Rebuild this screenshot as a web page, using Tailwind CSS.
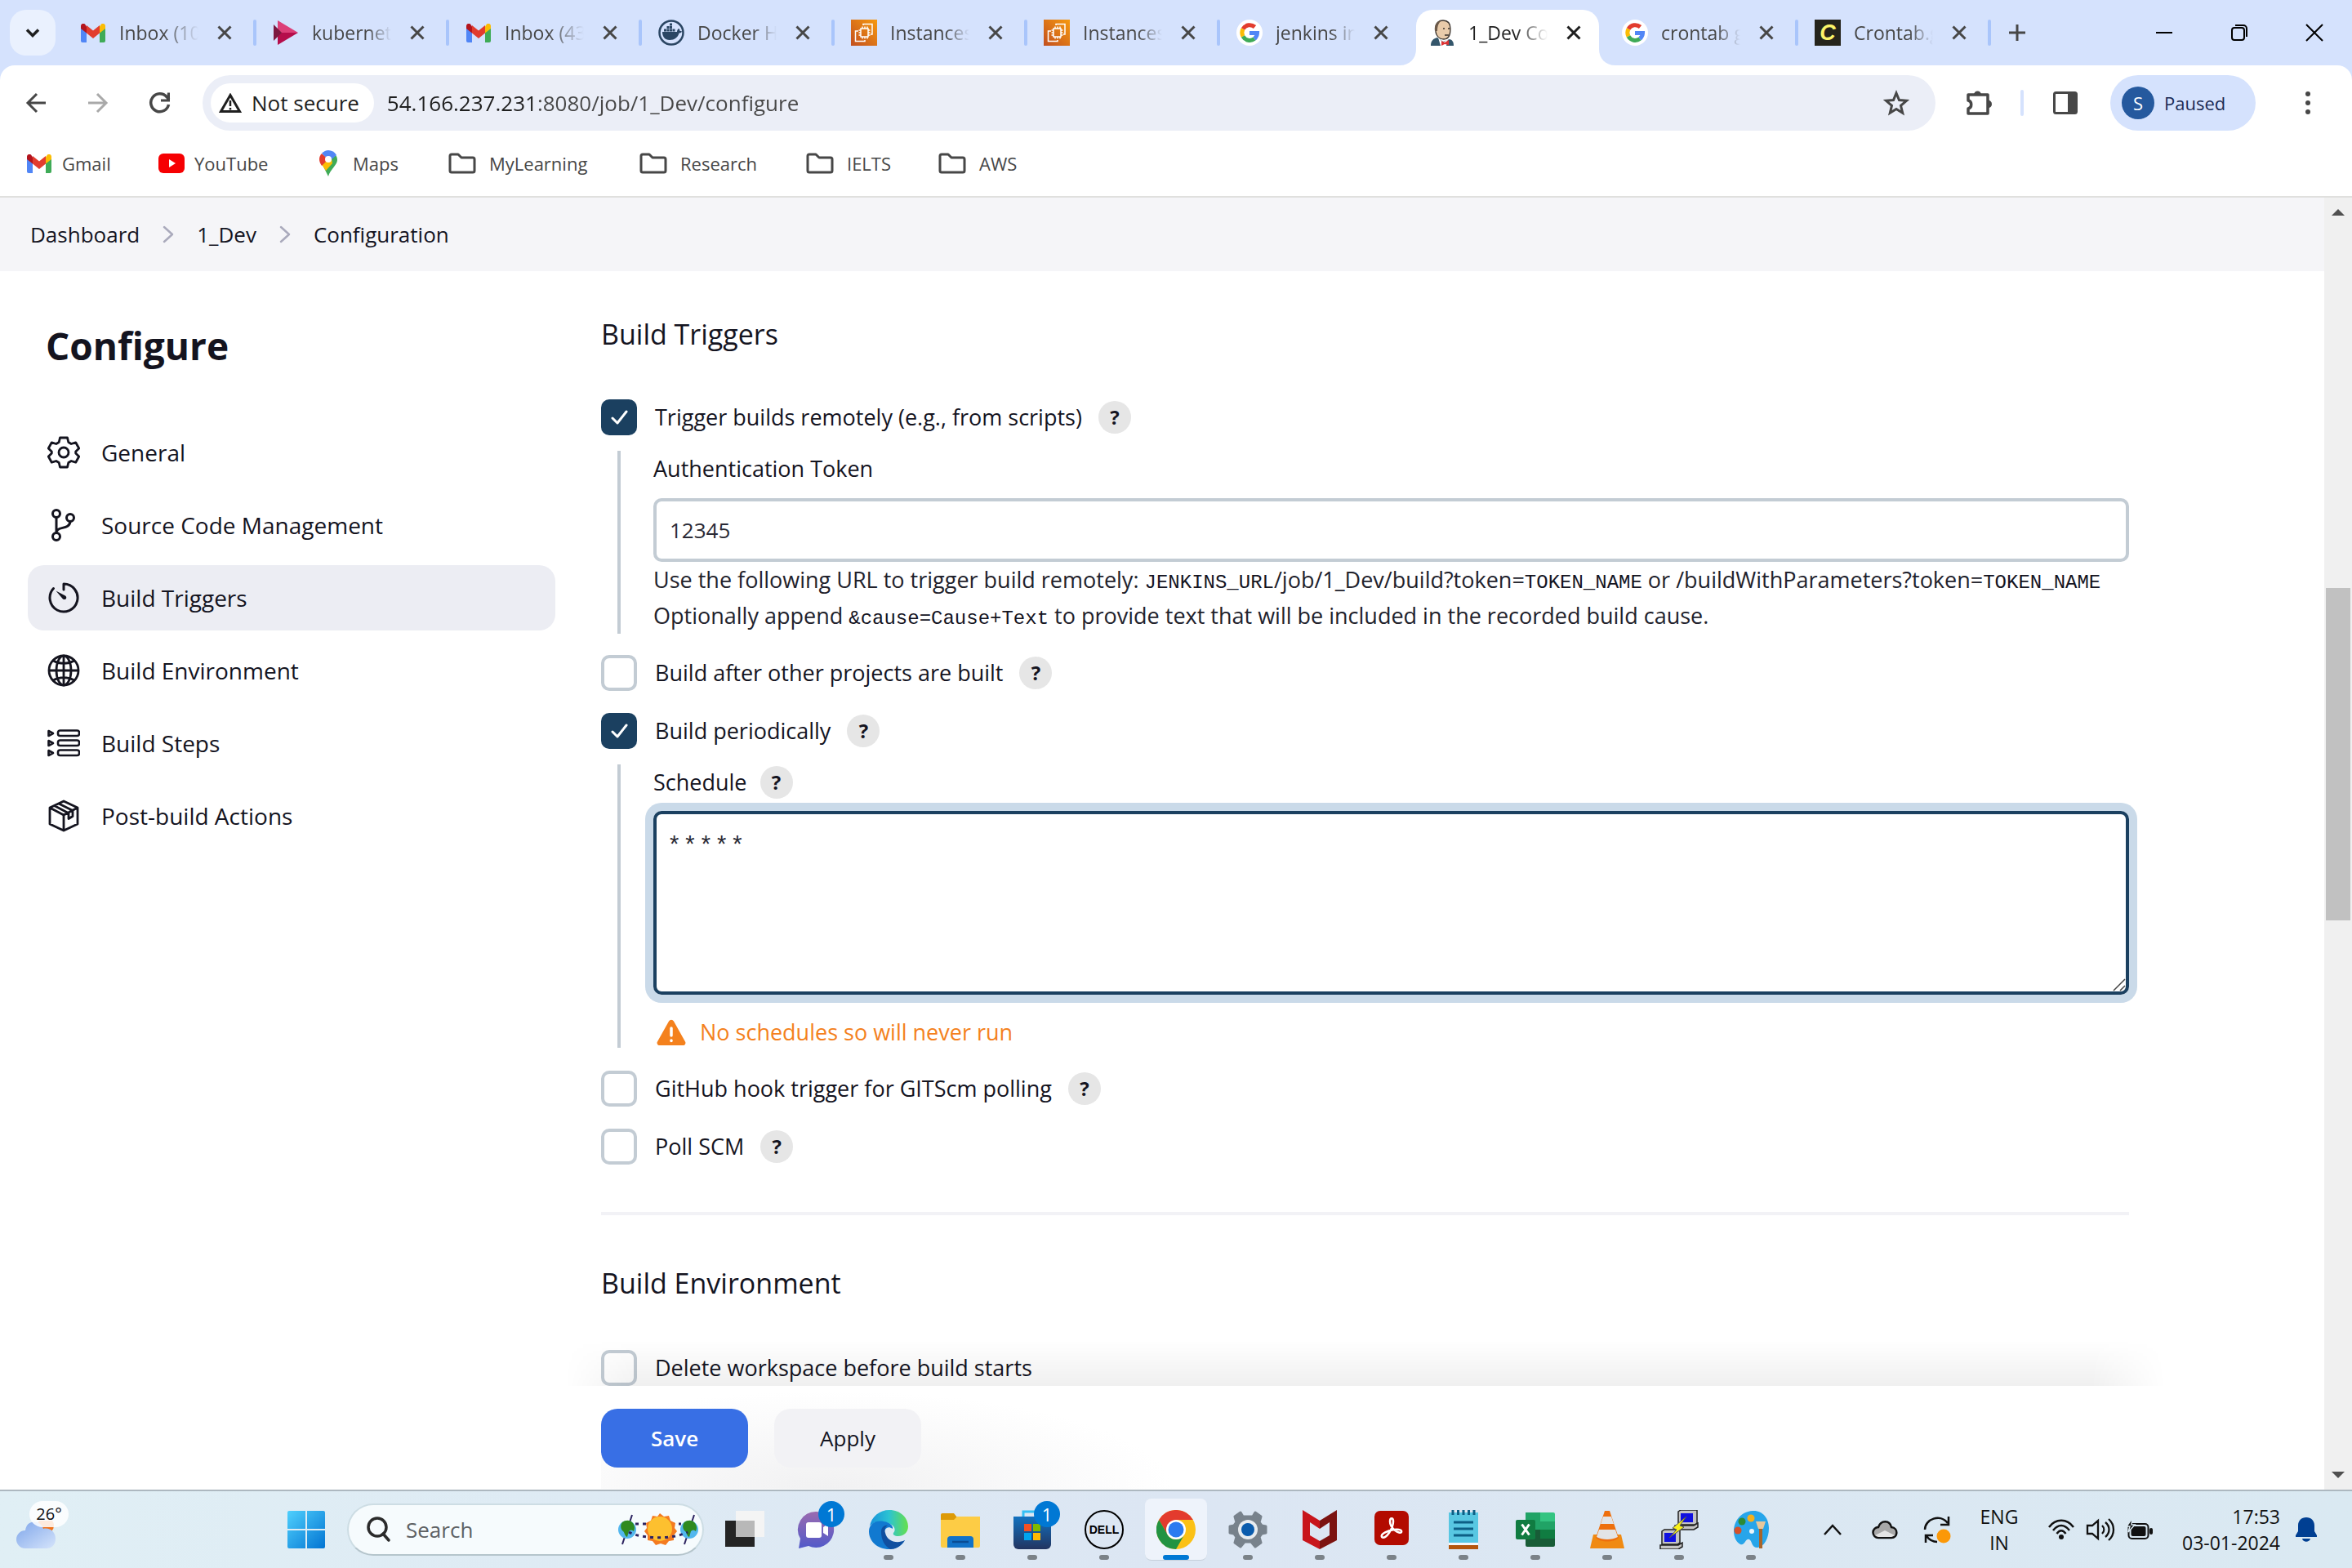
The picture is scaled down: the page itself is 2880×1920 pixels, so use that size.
<!DOCTYPE html>
<html lang="en">
<head>
<meta charset="utf-8">
<title>1_Dev Config [Jenkins]</title>
<script src="https://cdn.jsdelivr.net/npm/@tailwindcss/browser@4"></script>
</head>
<body class="flex min-h-screen flex-col bg-white font-['Open_Sans','Noto_Sans',sans-serif] text-[#14141f]">

<!-- Shared icon symbols -->
<svg class="absolute size-0" aria-hidden="true">
  <defs><linearGradient id="og" x1="0" y1="1" x2="1" y2="0"><stop stop-color="#c24f1f"/><stop offset="1" stop-color="#f79a10"/></linearGradient></defs>
  <symbol id="gmail" viewBox="0 0 30 23">
    <path fill="#5186f6" d="M0 5v16a2 2 0 0 0 2 2h5V10z"/><path fill="#3fab57" d="M30 5v16a2 2 0 0 1-2 2h-5V10z"/>
    <path fill="#fbbc04" d="M23 3.500v8l7-5.500V3c0-3-3-4-5-2.500z"/><path fill="#b3141d" d="M7 3.500v8L0 6V3C0 0 3-1 5 .500z"/><path fill="#e23c2e" d="M7 11.500V2l8 6.500L23 2v9.500L15 18z"/>
  </symbol>
  <symbol id="google" viewBox="0 0 32 32">
    <circle cx="16" cy="16" r="16" fill="#fff"/>
    <g fill="none" stroke-width="5"><path stroke="#e23c2e" d="M8 11.500A9.500 9.500 0 0 1 22.500 9"/><path stroke="#fbbc04" d="M8 11.500a9.500 9.500 0 0 0 0 9"/><path stroke="#3fab57" d="M8 20.500A9.500 9.500 0 0 0 22 23.500"/><path stroke="#5186f6" d="M16 16.500h9.500A9.500 9.500 0 0 1 22 23.500"/></g>
  </symbol>
  <symbol id="ec2" viewBox="0 0 32 32">
    <path fill="url(#og)" d="M0 0h32v32H0z"/>
    <g fill="none" stroke="#fff" stroke-width="1.500"><path d="M12 11h9v10h-9zM14 8.500V11m3-2.500V11m3-2.500V11M14 21v2.500M17 21v2.500M20 21v2.500M9.500 13H12m-2.500 3H12m-2.500 3H12M21 13h2.500M21 16h2.500M21 19h2.500"/><path d="M15 7V5.500h11V18h-2M9 14H5.500v12.500H17V25"/></g>
  </symbol>
  <symbol id="folder" viewBox="0 0 34 26"><path fill="none" stroke="#474747" stroke-width="3" stroke-linejoin="round" d="M2 4a2 2 0 0 1 2-2h8l4 4h14a2 2 0 0 1 2 2v14a2 2 0 0 1-2 2H4a2 2 0 0 1-2-2z"/></symbol>
  <symbol id="x" viewBox="0 0 24 24"><path fill="none" stroke="currentColor" stroke-width="3" d="M4.500 4.500l15 15m0-15l-15 15"/></symbol>
  <symbol id="check" viewBox="0 0 44 44"><path fill="none" stroke="#fff" stroke-width="3" stroke-linecap="round" stroke-linejoin="round" d="M14 23l6 6 11-14"/></symbol>
  <symbol id="crumb" viewBox="0 0 14 22"><path fill="none" stroke="#aaaabc" stroke-width="2.500" stroke-linecap="round" stroke-linejoin="round" d="M2 2l10 9-10 9"/></symbol>
</svg>

<!-- Browser chrome -->
<header class="bg-[#d5e2fd]">
  <div class="flex h-20 pl-3">
    <button aria-label="Search tabs" class="mt-3 mr-[10px] grid size-14 shrink-0 place-items-center rounded-[20px] bg-[#eaf1fe]">
      <svg class="size-6" viewBox="0 0 24 24"><path fill="none" stroke="#1f1f1f" stroke-width="3.500" d="M5 8.500l7 7 7-7"/></svg>
    </button>
    <nav aria-label="Tabs" class="flex">
      <div class="flex w-[236px] items-center pl-5">
        <svg class="h-[23px] w-8 shrink-0"><use href="#gmail"/></svg>
        <a href="#" class="ml-4 w-[97px] overflow-hidden text-[23px] leading-8 whitespace-nowrap text-[#474747] [mask-image:linear-gradient(to_right,black_55%,transparent)]">Inbox (10,482)</a>
        <button aria-label="Close tab" class="ml-5 text-[#474747]"><svg class="size-6"><use href="#x"/></svg></button>
        <span class="ml-auto h-8 w-1 rounded bg-[#a9c5fb]"></span>
      </div>
      <div class="flex w-[236px] items-center pl-5">
        <svg class="size-8 shrink-0" viewBox="0 0 32 32"><path fill="#dc3f78" d="M6 1l25 15H6z"/><path fill="#b50d4b" d="M6 31l25-15H6z"/><path fill="#7c1840" d="M1 6l10 10L1 26z"/></svg>
        <a href="#" class="ml-4 w-[97px] overflow-hidden text-[23px] leading-8 whitespace-nowrap text-[#474747] [mask-image:linear-gradient(to_right,black_70%,transparent)]">kubernetes</a>
        <button aria-label="Close tab" class="ml-5 text-[#474747]"><svg class="size-6"><use href="#x"/></svg></button>
        <span class="ml-auto h-8 w-1 rounded bg-[#a9c5fb]"></span>
      </div>
      <div class="flex w-[236px] items-center pl-5">
        <svg class="h-[23px] w-8 shrink-0"><use href="#gmail"/></svg>
        <a href="#" class="ml-4 w-[97px] overflow-hidden text-[23px] leading-8 whitespace-nowrap text-[#474747] [mask-image:linear-gradient(to_right,black_55%,transparent)]">Inbox (438)</a>
        <button aria-label="Close tab" class="ml-5 text-[#474747]"><svg class="size-6"><use href="#x"/></svg></button>
        <span class="ml-auto h-8 w-1 rounded bg-[#a9c5fb]"></span>
      </div>
      <div class="flex w-[236px] items-center pl-5">
        <svg class="size-8 shrink-0" viewBox="0 0 32 32"><circle cx="16" cy="16" r="14.500" fill="none" stroke="#2b4663" stroke-width="2.500"/><path fill="#2b4663" d="M5 15h18c0-2 1-3.500 2-4 1.500 1 1.500 2 1.500 3 1 0 2 0 2.500.500-.500 1.500-2 2-3.500 2C24 22 20 25 14 25c-6 0-9-4-9-10zM7 11.500h3v3H7zm3.500 0h3v3h-3zm3.500 0h3v3h-3zm3.500 0h3v3h-3zM10.500 8h3v3h-3zM14 8h3v3h-3zm0-3.500h3v3h-3z"/></svg>
        <a href="#" class="ml-4 w-[97px] overflow-hidden text-[23px] leading-8 whitespace-nowrap text-[#474747] [mask-image:linear-gradient(to_right,black_70%,transparent)]">Docker Hub</a>
        <button aria-label="Close tab" class="ml-5 text-[#474747]"><svg class="size-6"><use href="#x"/></svg></button>
        <span class="ml-auto h-8 w-1 rounded bg-[#a9c5fb]"></span>
      </div>
      <div class="flex w-[236px] items-center pl-5">
        <svg class="size-8 shrink-0"><use href="#ec2"/></svg>
        <a href="#" class="ml-4 w-[97px] overflow-hidden text-[23px] leading-8 whitespace-nowrap text-[#474747] [mask-image:linear-gradient(to_right,black_70%,transparent)]">Instances</a>
        <button aria-label="Close tab" class="ml-5 text-[#474747]"><svg class="size-6"><use href="#x"/></svg></button>
        <span class="ml-auto h-8 w-1 rounded bg-[#a9c5fb]"></span>
      </div>
      <div class="flex w-[236px] items-center pl-5">
        <svg class="size-8 shrink-0"><use href="#ec2"/></svg>
        <a href="#" class="ml-4 w-[97px] overflow-hidden text-[23px] leading-8 whitespace-nowrap text-[#474747] [mask-image:linear-gradient(to_right,black_70%,transparent)]">Instances</a>
        <button aria-label="Close tab" class="ml-5 text-[#474747]"><svg class="size-6"><use href="#x"/></svg></button>
        <span class="ml-auto h-8 w-1 rounded bg-[#a9c5fb]"></span>
      </div>
      <div class="flex w-[236px] items-center pl-5">
        <svg class="size-8 shrink-0"><use href="#google"/></svg>
        <a href="#" class="ml-4 w-[97px] overflow-hidden text-[23px] leading-8 whitespace-nowrap text-[#474747] [mask-image:linear-gradient(to_right,black_70%,transparent)]">jenkins install</a>
        <button aria-label="Close tab" class="ml-5 text-[#474747]"><svg class="size-6"><use href="#x"/></svg></button>
      </div>
      <!-- Active tab with flared feet -->
      <div class="relative flex w-[236px] px-1">
        <svg class="absolute bottom-0 -left-4 size-5" viewBox="0 0 20 20"><path fill="#fff" d="M20 0v20H0C12 20 20 12 20 0z"/></svg>
        <svg class="absolute -right-3 bottom-0 size-5" viewBox="0 0 20 20"><path fill="#fff" d="M0 0v20h20C8 20 0 12 0 0z"/></svg>
        <div class="mt-3 flex w-[224px] items-center rounded-t-[20px] bg-white pb-3 pl-4">
          <svg class="size-8 shrink-0" viewBox="0 0 32 32"><path fill="#e9cbaa" stroke="#3a332d" stroke-width="1.300" d="M8 10c0-6 4-9 9-9 6 0 9 4 9 10 0 8-2 13-8 13-7 0-11-6-10-14z"/><path fill="#6c5a4a" d="M7 14c-1-7 2-12 8-13-3 3-5 6-5 13z"/><path fill="#34566b" d="M2 32c0-6 3-9 8-10l7 5 8-3c4 1 5 4 5 8z"/><path fill="#fff" d="M11 22l6 6 6-4-2 8h-7z"/><path fill="#d33" d="M15 26l4 2 5-3v6l-5-1-4 2z"/><path stroke="#3a332d" stroke-width="1.300" d="M17 11h2m4 0h2m-6 8h5" fill="none"/></svg>
          <a href="#" aria-current="page" class="ml-4 w-[97px] overflow-hidden text-[23px] leading-8 whitespace-nowrap text-[#1f1f1f] [mask-image:linear-gradient(to_right,black_60%,transparent)]">1_Dev Config</a>
          <button aria-label="Close tab" class="ml-5 text-[#1f1f1f]"><svg class="size-6"><use href="#x"/></svg></button>
        </div>
      </div>
      <div class="flex w-[236px] items-center pl-5">
        <svg class="size-8 shrink-0"><use href="#google"/></svg>
        <a href="#" class="ml-4 w-[97px] overflow-hidden text-[23px] leading-8 whitespace-nowrap text-[#474747] [mask-image:linear-gradient(to_right,black_70%,transparent)]">crontab guru</a>
        <button aria-label="Close tab" class="ml-5 text-[#474747]"><svg class="size-6"><use href="#x"/></svg></button>
        <span class="ml-auto h-8 w-1 rounded bg-[#a9c5fb]"></span>
      </div>
      <div class="flex w-[236px] items-center pl-5">
        <span class="grid size-8 shrink-0 place-items-center bg-[#25241c] font-['Liberation_Sans',sans-serif] text-[27px] leading-8 font-bold text-[#fbf46a] italic">C</span>
        <a href="#" class="ml-4 w-[97px] overflow-hidden text-[23px] leading-8 whitespace-nowrap text-[#474747] [mask-image:linear-gradient(to_right,black_70%,transparent)]">Crontab.guru</a>
        <button aria-label="Close tab" class="ml-5 text-[#474747]"><svg class="size-6"><use href="#x"/></svg></button>
        <span class="ml-auto h-8 w-1 rounded bg-[#a9c5fb]"></span>
      </div>
    </nav>
    <button aria-label="New tab" class="ml-5"><svg class="size-6" viewBox="0 0 24 24"><path stroke="#474747" stroke-width="3" d="M12 2v20M2 12h20"/></svg></button>
    <div class="ml-auto flex items-center">
      <button aria-label="Minimize" class="grid w-[92px] place-items-center"><svg class="size-6" viewBox="0 0 24 24"><path stroke="#000" stroke-width="2" d="M2 12h20"/></svg></button>
      <button aria-label="Restore" class="grid w-[92px] place-items-center"><svg class="size-6" viewBox="0 0 24 24"><g fill="none" stroke="#000" stroke-width="2"><rect x="3" y="6" width="15" height="15" rx="3"/><path d="M7 3h10a4 4 0 0 1 4 4v10"/></g></svg></button>
      <button aria-label="Close" class="grid w-[92px] place-items-center"><svg class="size-6" viewBox="0 0 24 24"><path stroke="#000" stroke-width="2" d="M2 2l20 20M22 2L2 22"/></svg></button>
    </div>
  </div>

  <div class="rounded-t-[18px] border-b-2 border-[#e0e0de] bg-white">
    <div class="flex items-center pt-3 pr-[50px] pl-[30px]">
      <button aria-label="Back"><svg class="size-7" viewBox="0 0 28 28"><path fill="none" stroke="#474747" stroke-width="3" d="M26 14H4m11-11L4 14l11 11"/></svg></button>
      <button aria-label="Forward" class="ml-12"><svg class="size-7" viewBox="0 0 28 28"><path fill="none" stroke="#a9a9a9" stroke-width="3" d="M2 14h22M13 3l11 11-11 11"/></svg></button>
      <button aria-label="Reload" class="ml-12"><svg class="size-7" viewBox="0 0 28 28"><path fill="none" stroke="#474747" stroke-width="3.500" d="M24.500 16A11 11 0 1 1 22 6.500l3 3"/><path fill="#474747" d="M26 1.500v11H15v-3h7l1-8z"/></svg></button>
      <div class="ml-[38px] flex h-[68px] flex-1 items-center rounded-full bg-[#ebeef7] pr-8 pl-[10px]">
        <button class="flex h-12 items-center gap-3 rounded-full bg-white pr-[18px] pl-[10px] text-[26px] text-[#1f1f1f]">
          <svg class="h-6 w-7" viewBox="0 0 28 24"><path fill="none" stroke="#1f1f1f" stroke-width="3" d="M14 2.500L2.500 22.500h23z"/><path stroke="#1f1f1f" stroke-width="2.500" d="M14 9v7m0 2v2.500"/></svg>
          Not secure
        </button>
        <input aria-label="Address" value="54.166.237.231:8080/job/1_Dev/configure" class="ml-4 flex-1 bg-[linear-gradient(to_right,#1f1f1f_182px,#474747_182px)] bg-clip-text text-[26px] text-transparent outline-none">
        <button aria-label="Bookmark this tab"><svg class="size-8" viewBox="0 0 32 32"><path fill="none" stroke="#474747" stroke-width="3" d="M16 4l3.500 8.500 9 .800-7 6 2.200 9L16 23.500l-7.700 4.800 2.200-9-7-6 9-.800z"/></svg></button>
      </div>
      <button aria-label="Extensions" class="ml-9"><svg class="size-[34px]" viewBox="0 0 34 34"><path fill="none" stroke="#474747" stroke-width="3.500" stroke-linejoin="round" d="M4 7h24v23H4v-6c5-1 5-9 0-10z"/><path fill="#474747" d="M11 7a4.500 4.500 0 0 1 9 0zM28 13.500a5 5 0 0 1 0 10z"/></svg></button>
      <span class="ml-[34px] h-8 w-1 rounded bg-[#d5e2fd]"></span>
      <button aria-label="Side panel" class="ml-9"><svg class="h-7 w-[30px]" viewBox="0 0 30 28"><rect x="1.500" y="1.500" width="27" height="25" rx="2" fill="none" stroke="#474747" stroke-width="3"/><path fill="#474747" d="M18 1h11v26H18z"/></svg></button>
      <button class="ml-10 flex h-[68px] w-[178px] items-center gap-3 rounded-full bg-[#d5e2fd] pl-[14px] text-[22px] text-[#1b2b55]">
        <span class="grid size-10 place-items-center rounded-full bg-[#25599e] text-white">S</span>Paused
      </button>
      <button aria-label="Menu" class="ml-[60px]"><svg class="h-7 w-2" viewBox="0 0 8 28"><g fill="#474747"><circle cx="4" cy="3" r="3"/><circle cx="4" cy="14" r="3"/><circle cx="4" cy="25" r="3"/></g></svg></button>
    </div>
    <nav aria-label="Bookmarks" class="flex h-20 items-center pl-8 text-[22px] text-[#474747]">
      <a href="#" class="flex w-[162px] items-center gap-3"><svg class="h-[23px] w-8"><use href="#gmail"/></svg>Gmail</a>
      <a href="#" class="flex w-[190px] items-center gap-3"><svg class="h-6 w-8" viewBox="0 0 32 24"><rect width="32" height="24" rx="6" fill="#f60002"/><path fill="#fff" d="M13 7l8 5-8 5z"/></svg>YouTube</a>
      <a href="#" class="flex w-[165px] items-center gap-3"><svg class="h-8 w-9" viewBox="0 0 32 32"><path fill="#3fab57" d="M6 12l10 20c2-8 11-14 11-20 0-3-1-5-2-6z"/><path fill="#fbbc04" d="M7 16l12-12 2 12-8 9z"/><path fill="#e23c2e" d="M5 11c0-3 1-5 3-7l8 7-8 8c-2-3-3-5-3-8z"/><path fill="#5186f6" d="M8 4c5-6 14-5 18 2l-8 7z"/><circle cx="16" cy="11" r="4" fill="#fff"/></svg>Maps</a>
      <a href="#" class="flex w-[234px] items-center gap-4"><svg class="h-[26px] w-[34px]"><use href="#folder"/></svg>MyLearning</a>
      <a href="#" class="flex w-[204px] items-center gap-4"><svg class="h-[26px] w-[34px]"><use href="#folder"/></svg>Research</a>
      <a href="#" class="flex w-[162px] items-center gap-4"><svg class="h-[26px] w-[34px]"><use href="#folder"/></svg>IELTS</a>
      <a href="#" class="flex items-center gap-4"><svg class="h-[26px] w-[34px]"><use href="#folder"/></svg>AWS</a>
    </nav>
  </div>
</header>

<!-- Page viewport -->
<div class="flex flex-1">
  <div class="flex min-w-0 flex-1 flex-col">
    <nav aria-label="Breadcrumb" class="flex h-[90px] items-center gap-7 bg-[#f5f5f8] pl-[37px] text-[26px] font-medium">
      <a href="#">Dashboard</a><svg class="h-[22px] w-[14px]"><use href="#crumb"/></svg>
      <a href="#">1_Dev</a><svg class="h-[22px] w-[14px]"><use href="#crumb"/></svg>
      <a href="#">Configuration</a>
    </nav>

    <div class="flex flex-1 pr-[239px]">
      <aside class="w-[736px] shrink-0 pt-[59px] pl-[34px]">
        <h1 class="pl-[22px] text-[46px] leading-[64px] font-bold">Configure</h1>
        <nav aria-label="Sections" class="mt-[59px] flex w-[646px] flex-col gap-[9px] text-[28px] font-medium">
          <a href="#" class="flex h-20 items-center gap-[26px] rounded-[20px] pl-6"><svg class="size-10" viewBox="0 0 40 40"><g fill="none" stroke="#14141f" stroke-width="2.800" stroke-linejoin="round"><path d="M15.500 2h9l1.300 5.500 3.400 2 5.500-1.700 4 7.200-4 4v2l4 4-4 7.200-5.500-1.700-3.400 2L24.500 38h-9l-1.300-5.500-3.400-2-5.500 1.700-4-7.200 4-4v-2l-4-4 4-7.200 5.500 1.700 3.400-2z"/><circle cx="20" cy="20" r="6"/></g></svg>General</a>
          <a href="#" class="flex h-20 items-center gap-[26px] rounded-[20px] pl-6"><svg class="size-10" viewBox="0 0 40 40"><g fill="none" stroke="#14141f" stroke-width="3"><circle cx="11" cy="6" r="4.500"/><circle cx="11" cy="34" r="4.500"/><circle cx="28" cy="11" r="4.500"/><path d="M11 10.500v19c0-9 16-3 17-14"/></g></svg>Source Code Management</a>
          <a href="#" aria-current="true" class="flex h-20 items-center gap-[26px] rounded-[20px] bg-[#ecedf3] pl-6"><svg class="size-10" viewBox="0 0 40 40"><path fill="none" stroke="#14141f" stroke-width="3" stroke-linecap="round" stroke-linejoin="round" d="M20 10V3a17 17 0 1 1-12.500 5.500"/><path fill="#14141f" d="M10.500 11.500l11.500 6c3 2.500 0 6-3 4z"/></svg>Build Triggers</a>
          <a href="#" class="flex h-20 items-center gap-[26px] rounded-[20px] pl-6"><svg class="size-10" viewBox="0 0 40 40"><g fill="none" stroke="#14141f" stroke-width="2.800"><circle cx="20" cy="20" r="18"/><ellipse cx="20" cy="20" rx="9" ry="18"/><path d="M20 2v36M2 20h36M7 8c8 4.500 18 4.500 26 0M7 32c8-4.500 18-4.500 26 0"/></g></svg>Build Environment</a>
          <a href="#" class="flex h-20 items-center gap-[26px] rounded-[20px] pl-6"><svg class="size-10" viewBox="0 0 40 40"><g fill="none" stroke="#14141f" stroke-width="2.600" stroke-linejoin="round"><rect x="13" y="4.500" width="26" height="6.500" rx="2.500"/><rect x="13" y="16.500" width="26" height="6.500" rx="2.500"/><rect x="13" y="28.500" width="26" height="6.500" rx="2.500"/><path d="M1.500 5v6L7 8zM1.500 17v6L7 20zM1.500 29v6L7 32z"/></g></svg>Build Steps</a>
          <a href="#" class="flex h-20 items-center gap-[26px] rounded-[20px] pl-6"><svg class="size-10" viewBox="0 0 40 40"><g fill="none" stroke="#14141f" stroke-width="2.800" stroke-linejoin="round"><path d="M20 2l17 8v20l-17 8-17-8V10zM3 10l17 9 17-9M20 19v19M8.500 7.500l17 9M14 5l17 8.500v7l-5 3v-7"/></g></svg>Post-build Actions</a>
        </nav>
      </aside>

      <form class="flex min-w-0 flex-1 flex-col pt-[53px]">
        <h2 class="text-[34px] leading-[48px] font-medium">Build Triggers</h2>

        <div class="mt-14 flex h-11 items-center text-[27px] font-medium">
          <span class="grid size-11"><input id="remote" type="checkbox" checked class="col-start-1 row-start-1 size-11 appearance-none rounded-[10px] bg-[#1b4060]"><svg class="pointer-events-none col-start-1 row-start-1 size-11"><use href="#check"/></svg></span>
          <label for="remote" class="ml-[22px]">Trigger builds remotely (e.g., from scripts)</label>
          <button type="button" aria-label="Help" class="ml-5 size-10 rounded-full bg-[#e6e6e6] text-[24px] leading-10 font-bold">?</button>
        </div>
        <div class="mt-[19px] ml-5 border-l-4 border-[#c3ccd4] pl-10">
          <label for="token" class="block text-[27px] leading-[44px] font-medium">Authentication Token</label>
          <input id="token" value="12345" class="mt-[14px] block h-[78px] w-full rounded-[10px] border-4 border-[#c3ccd4] px-4 text-[26px] text-[#2a2a35] outline-none">
          <p class="text-[27px] leading-[44px] text-[#22222c]">Use the following URL to trigger build remotely: <code class="font-['Liberation_Mono',monospace] text-[24px] leading-none text-[#14141f]">JENKINS_URL</code>/job/1_Dev/build?token=<code class="font-['Liberation_Mono',monospace] text-[24px] leading-none text-[#14141f]">TOKEN_NAME</code> or /buildWithParameters?token=<code class="font-['Liberation_Mono',monospace] text-[24px] leading-none text-[#14141f]">TOKEN_NAME</code><br>Optionally append <code class="font-['Liberation_Mono',monospace] text-[24px] leading-none text-[#14141f]">&amp;cause=Cause+Text</code> to provide text that will be included in the recorded build cause.</p>
        </div>

        <div class="mt-[26px] flex h-11 items-center text-[27px] font-medium">
          <input id="after" type="checkbox" class="size-11 appearance-none rounded-[10px] border-4 border-[#c3ccd4]">
          <label for="after" class="ml-[22px]">Build after other projects are built</label>
          <button type="button" aria-label="Help" class="ml-5 size-10 rounded-full bg-[#e6e6e6] text-[24px] leading-10 font-bold">?</button>
        </div>
        <div class="mt-[27px] flex h-11 items-center text-[27px] font-medium">
          <span class="grid size-11"><input id="periodic" type="checkbox" checked class="col-start-1 row-start-1 size-11 appearance-none rounded-[10px] bg-[#1b4060]"><svg class="pointer-events-none col-start-1 row-start-1 size-11"><use href="#check"/></svg></span>
          <label for="periodic" class="ml-[22px]">Build periodically</label>
          <button type="button" aria-label="Help" class="ml-5 size-10 rounded-full bg-[#e6e6e6] text-[24px] leading-10 font-bold">?</button>
        </div>
        <div class="mt-[19px] ml-5 border-l-4 border-[#c3ccd4] pl-10">
          <div class="flex h-11 items-center text-[27px] font-medium">
            <label for="schedule">Schedule</label>
            <button type="button" aria-label="Help" class="ml-4 size-10 rounded-full bg-[#e6e6e6] text-[24px] leading-10 font-bold">?</button>
          </div>
          <div class="relative mt-[13px]">
            <textarea id="schedule" class="block h-[225px] w-full resize-none rounded-[10px] border-4 border-[#1b4060] px-4 py-5 font-['Liberation_Sans',sans-serif] text-[29px] leading-8 text-[#2a2a35] ring-10 ring-[#cadae9] outline-none">* * * * *</textarea>
            <svg class="absolute right-1 bottom-1 size-4" viewBox="0 0 16 16"><path fill="none" stroke="#444" stroke-width="1.500" d="M1 15L15 1M9 15l6-6"/></svg>
          </div>
          <p class="mt-[27px] flex h-[38px] items-center gap-4 pl-[3px] text-[27px] font-medium text-[#f4811d]">
            <svg class="h-8 w-[38px]" viewBox="0 0 38 32"><path fill="#f4811d" d="M16 2.500a3.500 3.500 0 0 1 6 0l14 25a3 3 0 0 1-3 4.500H5a3 3 0 0 1-3-4.500z"/><path stroke="#fff" stroke-width="3.500" stroke-linecap="round" d="M19 11v9m0 6v.500"/></svg>
            No schedules so will never run
          </p>
        </div>
        <div class="mt-7 flex h-11 items-center text-[27px] font-medium">
          <input id="hook" type="checkbox" class="size-11 appearance-none rounded-[10px] border-4 border-[#c3ccd4]">
          <label for="hook" class="ml-[22px]">GitHub hook trigger for GITScm polling</label>
          <button type="button" aria-label="Help" class="ml-5 size-10 rounded-full bg-[#e6e6e6] text-[24px] leading-10 font-bold">?</button>
        </div>
        <div class="mt-[27px] flex h-11 items-center text-[27px] font-medium">
          <input id="poll" type="checkbox" class="size-11 appearance-none rounded-[10px] border-4 border-[#c3ccd4]">
          <label for="poll" class="ml-[22px]">Poll SCM</label>
          <button type="button" aria-label="Help" class="ml-5 size-10 rounded-full bg-[#e6e6e6] text-[24px] leading-10 font-bold">?</button>
        </div>

        <hr class="mt-[58px] border-t-4 border-[#f2f2f6]">
        <h2 class="mt-[59px] text-[34px] leading-[48px] font-medium">Build Environment</h2>
        <div class="mt-[58px] flex h-11 items-center text-[27px] font-medium">
          <input id="wipe" type="checkbox" class="size-11 appearance-none rounded-[10px] border-4 border-[#c3ccd4]">
          <label for="wipe" class="ml-[22px]">Delete workspace before build starts</label>
        </div>

        <div class="relative flex gap-8 bg-[radial-gradient(420px_120px_at_280px_100%,#f1f1f2,#ffffff)] pt-7 pb-[26px] text-[26px]">
          <div class="pointer-events-none absolute -right-11 bottom-full -left-11 h-14 bg-linear-to-t from-black/6 to-transparent [mask-image:linear-gradient(to_right,transparent,black_90px,black_calc(100%_-_90px),transparent)]"></div>
          <button class="h-[72px] w-[180px] rounded-[20px] bg-[#386fe5] font-semibold text-white">Save</button>
          <button type="button" class="h-[72px] w-[180px] rounded-[20px] bg-[#f2f2f5] font-medium">Apply</button>
        </div>
      </form>
    </div>
  </div>

  <!-- Scrollbar -->
  <div class="flex w-[34px] flex-col items-center bg-[#f0f0f0]">
    <svg class="mt-[14px] h-2 w-4" viewBox="0 0 16 8"><path fill="#505050" d="M8 0l8 8H0z"/></svg>
    <div class="mt-[456px] h-[407px] w-[30px] bg-[#c1c1c1]"></div>
    <svg class="mt-auto mb-[14px] h-2 w-4" viewBox="0 0 16 8"><path fill="#505050" d="M8 8l8-8H0z"/></svg>
  </div>
</div>

<!-- Taskbar -->
<footer class="flex h-24 items-center border-t-2 border-[#adb8c0] bg-linear-to-r from-[#e0eff5] via-[#dce6f3] to-[#dae9f2] text-[#111]">
  <button class="relative h-full w-[331px] shrink-0 text-left">
    <svg class="absolute top-9 left-5 h-9 w-12" viewBox="0 0 48 36"><defs><linearGradient id="cl" x1="0" y1="0" x2="1" y2="1"><stop stop-color="#7fa6ea"/><stop offset="1" stop-color="#d5e4fb"/></linearGradient></defs><circle cx="36" cy="6" r="10" fill="#f0731c"/><path fill="url(#cl)" d="M11 34a11 11 0 0 1 0-22c1-9 8-12 14-10 4 1 7 4 8 8 8-2 15 4 15 12s-5 12-11 12z"/></svg>
    <span class="absolute top-3 left-9 grid h-8 w-12 place-items-center rounded-full bg-white/85 text-[20px]">26°</span>
  </button>
  <button aria-label="Start" class="grid w-[88px] shrink-0 place-items-center"><svg class="size-[46px]" viewBox="0 0 46 46"><defs><linearGradient id="wn" x1="0" y1="0" x2="1" y2="1"><stop stop-color="#4fd0fd"/><stop offset="1" stop-color="#0274d2"/></linearGradient></defs><path fill="url(#wn)" d="M2 0h20v22H0V2a2 2 0 0 1 2-2zM24 0h20a2 2 0 0 1 2 2v20H24zM0 24h22v22H2a2 2 0 0 1-2-2zM24 24h22v20a2 2 0 0 1-2 2H24z"/></svg></button>
  <label class="mx-[6px] flex h-16 w-[437px] shrink-0 items-center rounded-full border-2 border-b-[#b5c5cc] border-[#cddde4] bg-[#f6fbfd] pr-1 pl-5">
    <svg class="size-8" viewBox="0 0 32 32"><circle cx="15" cy="13" r="11" fill="none" stroke="#2b2b2b" stroke-width="3.500"/><path stroke="#2b2b2b" stroke-width="3.500" stroke-linecap="round" d="M22 21l7 8"/></svg>
    <input aria-label="Search" placeholder="Search" class="ml-[18px] w-40 flex-1 text-[26px] outline-none placeholder:text-[#5d6164]">
    <svg class="h-10 w-[100px]" viewBox="0 0 100 40"><path fill="none" stroke="#2c2360" stroke-width="3" stroke-dasharray="4 5" d="M22 13h14m30 0h12"/><path stroke="#2c2360" stroke-width="2" d="M18 2L6 38M94 2L82 38"/><circle cx="12" cy="20" r="11" fill="#53b7ee"/><circle cx="88" cy="20" r="11" fill="#53b7ee"/><path fill="#2f8a1f" d="M6 11c4-3 9-3 12 0 3 3 4 7 2 11-2-2-4-2-6 0l-2 7c-3-1-3-5-5-7-3-2-4-7-1-11zM82 11c4-3 9-3 12 0 3 3 4 7 2 11-2-2-4-2-6 0l-2 7c-3-1-3-5-5-7-3-2-4-7-1-11z"/><path fill="#f47b20" d="M52 0l5 4 6-1 2 6 6 3-1 6 3 4-4 5v6l-6 1-4 5-6-2-6 2-4-5-6-1v-6l-4-5 3-4-1-6 6-3 2-6 6 1z"/><circle cx="52" cy="19" r="15" fill="#fdc02f"/><path fill="none" stroke="#2c2360" stroke-width="3" stroke-dasharray="4 5" d="M14 23c16 9 56 9 72 0"/></svg>
  </label>
  <nav aria-label="Apps" class="flex">
    <button aria-label="Task view" class="grid h-[94px] w-[88px] place-items-center"><svg class="size-12" viewBox="0 0 48 48"><path fill="#242424" d="M0 13h36v32H0z"/><path fill="#f4f4f4" d="M13 1h35v32H13z"/><path fill="#b8b8b8" d="M13 13h23v20H13z"/></svg></button>
    <button aria-label="Chat" class="relative grid h-[94px] w-[88px] place-items-center"><svg class="size-12" viewBox="0 0 48 48"><defs><linearGradient id="ch" x1="0" y1="0" x2="0" y2="1"><stop stop-color="#9a6bb0"/><stop offset="1" stop-color="#5159c9"/></linearGradient></defs><path fill="url(#ch)" d="M24 2a22 22 0 1 1-10 42L2 47l2-12A22 22 0 0 1 24 2z"/><rect x="11" y="15" width="19" height="19" rx="3" fill="#fff"/><path fill="#fff" d="M32 21l6-4v15l-6-4z"/></svg><span class="absolute top-3 left-[46px] grid size-8 place-items-center rounded-full bg-[#0078d4] text-[22px] text-white">1</span></button>
    <button aria-label="Edge" class="relative grid h-[94px] w-[88px] place-items-center"><svg class="size-12" viewBox="0 0 48 48"><defs><linearGradient id="e1" x1="0" y1="0" x2="1" y2="0"><stop stop-color="#1791dc"/><stop offset=".5" stop-color="#2cc3d2"/><stop offset="1" stop-color="#66e04b"/></linearGradient></defs><path fill="url(#e1)" d="M1 20C3 8 13 0 25 0c14 0 23 10 23 20 0 8-6 12-12 12-5 0-7-2-6-4 3-3 2-8-4-11C16 12 5 14 1 20z"/><path fill="#1179d0" d="M0 26C0 17 9 12 18 14c8 1 12 6 11 9-6-4-10 0-10 5 0 12 14 18 25 9C40 44 33 48 25 48 10 48 0 38 0 26z"/><path fill="#0f4fa0" d="M15 27c0-5 3-9 8-8-4 2-4 6-3 9 2 10 14 14 24 9-5 8-12 11-18 11-7-4-11-12-11-21z"/></svg><span class="absolute bottom-[10px] h-[6px] w-3 rounded-full bg-[#7b8288]"></span></button>
    <button aria-label="File Explorer" class="relative grid h-[94px] w-[88px] place-items-center"><svg class="size-12" viewBox="0 0 48 48"><path fill="#dd9a06" d="M0 6a2 2 0 0 1 2-2h14l4 5v6H0z"/><path fill="#fdcc45" d="M0 12h16l4-4h28v36a2 2 0 0 1-2 2H2a2 2 0 0 1-2-2z"/><path fill="#1272c8" d="M8 46V36a4 4 0 0 1 4-4h24a4 4 0 0 1 4 4v10z"/><path stroke="#0a4c94" stroke-width="2.500" d="M14 39h20"/></svg><span class="absolute bottom-[10px] h-[6px] w-3 rounded-full bg-[#7b8288]"></span></button>
    <button aria-label="Microsoft Store" class="relative grid h-[94px] w-[88px] place-items-center"><svg class="size-12" viewBox="0 0 48 48"><defs><linearGradient id="ms" x1="0" y1="0" x2="0" y2="1"><stop stop-color="#1272c0"/><stop offset="1" stop-color="#223460"/></linearGradient></defs><path fill="none" stroke="#35c0f5" stroke-width="3" d="M13 9V2h20v7"/><path fill="url(#ms)" d="M1 8h46v34a6 6 0 0 1-6 6H7a6 6 0 0 1-6-6z"/><path fill="#f25022" d="M14 17h9v9h-9z"/><path fill="#7fba00" d="M25 17h9v9h-9z"/><path fill="#00a4ef" d="M14 28h9v9h-9z"/><path fill="#ffb900" d="M25 28h9v9h-9z"/></svg><span class="absolute top-3 left-[46px] grid size-8 place-items-center rounded-full bg-[#0078d4] text-[22px] text-white">1</span><span class="absolute bottom-[10px] h-[6px] w-3 rounded-full bg-[#7b8288]"></span></button>
    <button aria-label="Dell" class="relative grid h-[94px] w-[88px] place-items-center"><span class="grid size-12 place-items-center rounded-full border-2 border-black font-['Liberation_Sans',sans-serif] text-[14px] font-bold text-black">DELL</span><span class="absolute bottom-[10px] h-[6px] w-3 rounded-full bg-[#7b8288]"></span></button>
    <button aria-label="Chrome" class="relative grid h-[94px] w-[88px] place-items-center"><span class="grid size-[76px] place-items-center rounded-lg border-b border-[#c5cfda] bg-[#eef3fb]"><svg class="size-12" viewBox="0 0 48 48"><circle cx="24" cy="24" r="24" fill="#fbc116"/><path fill="#e33b2e" d="M3.200 12A24 24 0 0 1 44.800 12H24L13.600 30z"/><path fill="#229342" d="M3.200 12L13.600 30A12 12 0 0 0 34.400 30L24 48A24 24 0 0 1 3.200 12z"/><circle cx="24" cy="24" r="12" fill="#fff"/><circle cx="24" cy="24" r="9.500" fill="#2b7bf0"/></svg></span><span class="absolute bottom-[10px] h-[6px] w-8 rounded-full bg-[#0078d4]"></span></button>
    <button aria-label="Settings" class="relative grid h-[94px] w-[88px] place-items-center"><svg class="size-12" viewBox="0 0 48 48"><path fill="#78828c" stroke="#78828c" stroke-width="3" stroke-linejoin="round" d="M18 8L15 3 8 8l2 7-3 4-5 1v8l5 1 3 4-2 7 7 5 5-6h8l5 6 7-5-2-7 3-4 5-1v-8l-5-1-3-4 2-7-7-5-3 5z"/><circle cx="24" cy="24" r="12" fill="#e8ecf0"/><circle cx="24" cy="24" r="8" fill="#0b5cad"/></svg><span class="absolute bottom-[10px] h-[6px] w-3 rounded-full bg-[#7b8288]"></span></button>
    <button aria-label="McAfee" class="relative grid h-[94px] w-[88px] place-items-center"><svg class="size-12" viewBox="0 0 48 48"><path fill="#c8151b" d="M3 0l21 13v10l-12-8v16l12 7v10L3 37z"/><path fill="#7c1310" d="M45 0L24 13v10l12-8v16l-12 7v10l21-11z"/></svg><span class="absolute bottom-[10px] h-[6px] w-3 rounded-full bg-[#7b8288]"></span></button>
    <button aria-label="Acrobat" class="relative grid h-[94px] w-[88px] place-items-center"><svg class="size-12" viewBox="0 0 48 48"><rect x="3" y="1" width="42" height="42" rx="7" fill="#b30b00"/><path fill="none" stroke="#fff" stroke-width="2.500" d="M12 33c-2-4 8-8 15-9 7-1 10 1 9 3-2 3-14-4-14-13 0-5 4-5 4 0 0 8-9 23-14 19z"/></svg><span class="absolute bottom-[10px] h-[6px] w-3 rounded-full bg-[#7b8288]"></span></button>
    <button aria-label="Notepad" class="relative grid h-[94px] w-[88px] place-items-center"><svg class="size-12" viewBox="0 0 48 48"><path fill="#58c7e2" d="M6 3h36v37H6z"/><path fill="#f5f7f8" d="M6 40h36v3H6z"/><path fill="#b4560c" d="M6 43h36v5H6z"/><path stroke="#0d5f85" stroke-width="3" d="M11 0v6m6.500-6v6M24 0v6m6.500-6v6M37 0v6M12 15h24M12 23h24M12 31h24"/></svg><span class="absolute bottom-[10px] h-[6px] w-3 rounded-full bg-[#7b8288]"></span></button>
    <button aria-label="Excel" class="relative grid h-[94px] w-[88px] place-items-center"><svg class="size-12" viewBox="0 0 48 48"><path fill="#21a366" d="M12 3h18v21H12z"/><path fill="#33c481" d="M30 3h16a2 2 0 0 1 2 2v9H30z"/><path fill="#21a366" d="M30 14h18v10H30z"/><path fill="#107c41" d="M30 24h18v11H30z"/><path fill="#185c37" d="M12 24h18v11h18v8a2 2 0 0 1-2 2H14a2 2 0 0 1-2-2z"/><rect y="12" width="24" height="24" rx="2" fill="#107c41"/><path stroke="#fff" stroke-width="3" d="M7.500 17.500l9 13m0-13l-9 13"/></svg><span class="absolute bottom-[10px] h-[6px] w-3 rounded-full bg-[#7b8288]"></span></button>
    <button aria-label="VLC" class="relative grid h-[94px] w-[88px] place-items-center"><svg class="size-12" viewBox="0 0 48 48"><path fill="#f08a12" d="M7 30h34l4 17H3z"/><path fill="#ee6f0c" d="M21 1h6l11 33c-6 6-22 6-28 0z"/><path fill="#e2e4e6" d="M19 8h10l3 9H16zM14 24h20l3 9c-7 4-19 4-26 0z"/></svg><span class="absolute bottom-[10px] h-[6px] w-3 rounded-full bg-[#7b8288]"></span></button>
    <button aria-label="PuTTY" class="relative grid h-[94px] w-[88px] place-items-center"><svg class="size-12" viewBox="0 0 48 48"><g fill="#c4c4c4" stroke="#222" stroke-width="1.500"><path d="M23 2l3-2h20v16l-3 2H23zM19 19h23l5-3v5l-5 3H19zM3 26l3-2h19v16l-3 2H3zM1 43h22l5-3v5l-5 3H1z"/></g><path fill="#1010e0" d="M26 4h15v11H26zM6 28h14v11H6z"/><path fill="#f8f01a" stroke="#555" d="M33 8L16 22l5 2-9 10 18-13-5-2z"/></svg><span class="absolute bottom-[10px] h-[6px] w-3 rounded-full bg-[#7b8288]"></span></button>
    <button aria-label="Paint" class="relative grid h-[94px] w-[88px] place-items-center"><svg class="size-12" viewBox="0 0 48 48"><path fill="#27a5ea" d="M26 1c12-1 20 9 20 21 0 13-6 23-14 24-8 0-6-8-10-10-5-2-5 8-11 6C-3 34 1 3 26 1z"/><circle cx="13" cy="14" r="4.500" fill="#2c8a35"/><circle cx="24" cy="10" r="4.500" fill="#f5b01c"/><circle cx="8" cy="25" r="4.500" fill="#d5502a"/><circle cx="25" cy="26" r="3" fill="#e8f5fb"/><path fill="#e6c79c" d="M30 14h12l-3 9h-6z"/><path fill="#a8642a" d="M34 23h4v24h-4z"/></svg><span class="absolute bottom-[10px] h-[6px] w-3 rounded-full bg-[#7b8288]"></span></button>
  </nav>
  <div class="ml-auto flex items-center pr-[42px]">
    <button aria-label="Show hidden icons"><svg class="h-4 w-6" viewBox="0 0 24 16"><path fill="none" stroke="#111" stroke-width="2.500" d="M2 14L12 3l10 11"/></svg></button>
    <button aria-label="OneDrive" class="ml-9"><svg class="h-6 w-8" viewBox="0 0 32 24"><path fill="#a8a8a8" stroke="#111" stroke-width="2.500" d="M8 22a6.500 6.500 0 0 1 0-13c3-9 14-9 16 0 9 1 8 13 0 13z"/><path fill="#e4e4e4" d="M4 19l12-6 12 6-4 2H8z"/></svg></button>
    <button aria-label="Updates" class="ml-[30px]"><svg class="size-9" viewBox="0 0 36 36"><path fill="none" stroke="#111" stroke-width="2.500" d="M3 18C3 5 22-2 31 10M32 2v10H22M18 33C12 33 8 30 5 26M4 34v-9h9"/><circle cx="26" cy="26" r="8.500" fill="#fb9808"/></svg></button>
    <button class="ml-[30px] w-14 text-center text-[23px] leading-8">ENG<br>IN</button>
    <button aria-label="Network, volume, battery" class="ml-[32px] flex items-center gap-[14px]">
      <svg class="h-7 w-8" viewBox="0 0 32 28"><g fill="none" stroke="#111" stroke-width="2.500"><path d="M1 11c8-11 22-11 30 0M6 15c6-8 14-8 20 0M10.500 19c3.500-5 7.500-5 11 0"/></g><circle cx="16" cy="23" r="3" fill="#111"/></svg>
      <svg class="h-7 w-9" viewBox="0 0 36 28"><g fill="none" stroke="#111" stroke-width="2.300"><path d="M2 9h6l7-6v22l-7-6H2zM20 9c3 3 3 7 0 10M24 5c6 5 6 13 0 18M28 1c8 7 8 19 0 26"/></g></svg>
      <svg class="h-7 w-8" viewBox="0 0 32 28"><rect x="2.500" y="7" width="24" height="18" rx="4" fill="none" stroke="#111" stroke-width="2"/><rect x="5.500" y="10" width="18" height="12" rx="2" fill="#111"/><rect x="28" y="12" width="4" height="8" rx="2" fill="#111"/><path fill="#111" stroke="#dae9f2" stroke-width="1.500" d="M7 0L0 10h4l-2 7 8-9H6z"/></svg>
    </button>
    <button class="ml-8 w-[124px] text-right text-[23px] leading-8 whitespace-nowrap">17:53<br>03-01-2024</button>
    <button aria-label="Notifications" class="ml-[18px]"><svg class="h-8 w-7" viewBox="0 0 28 32"><path fill="#003f92" d="M14 1c6 0 10 4 10 10v7l3 5v2H1v-2l3-5v-7C4 5 8 1 14 1zM9 27h10c-1 5-9 5-10 0z"/></svg></button>
  </div>
</footer>
</body>
</html>
